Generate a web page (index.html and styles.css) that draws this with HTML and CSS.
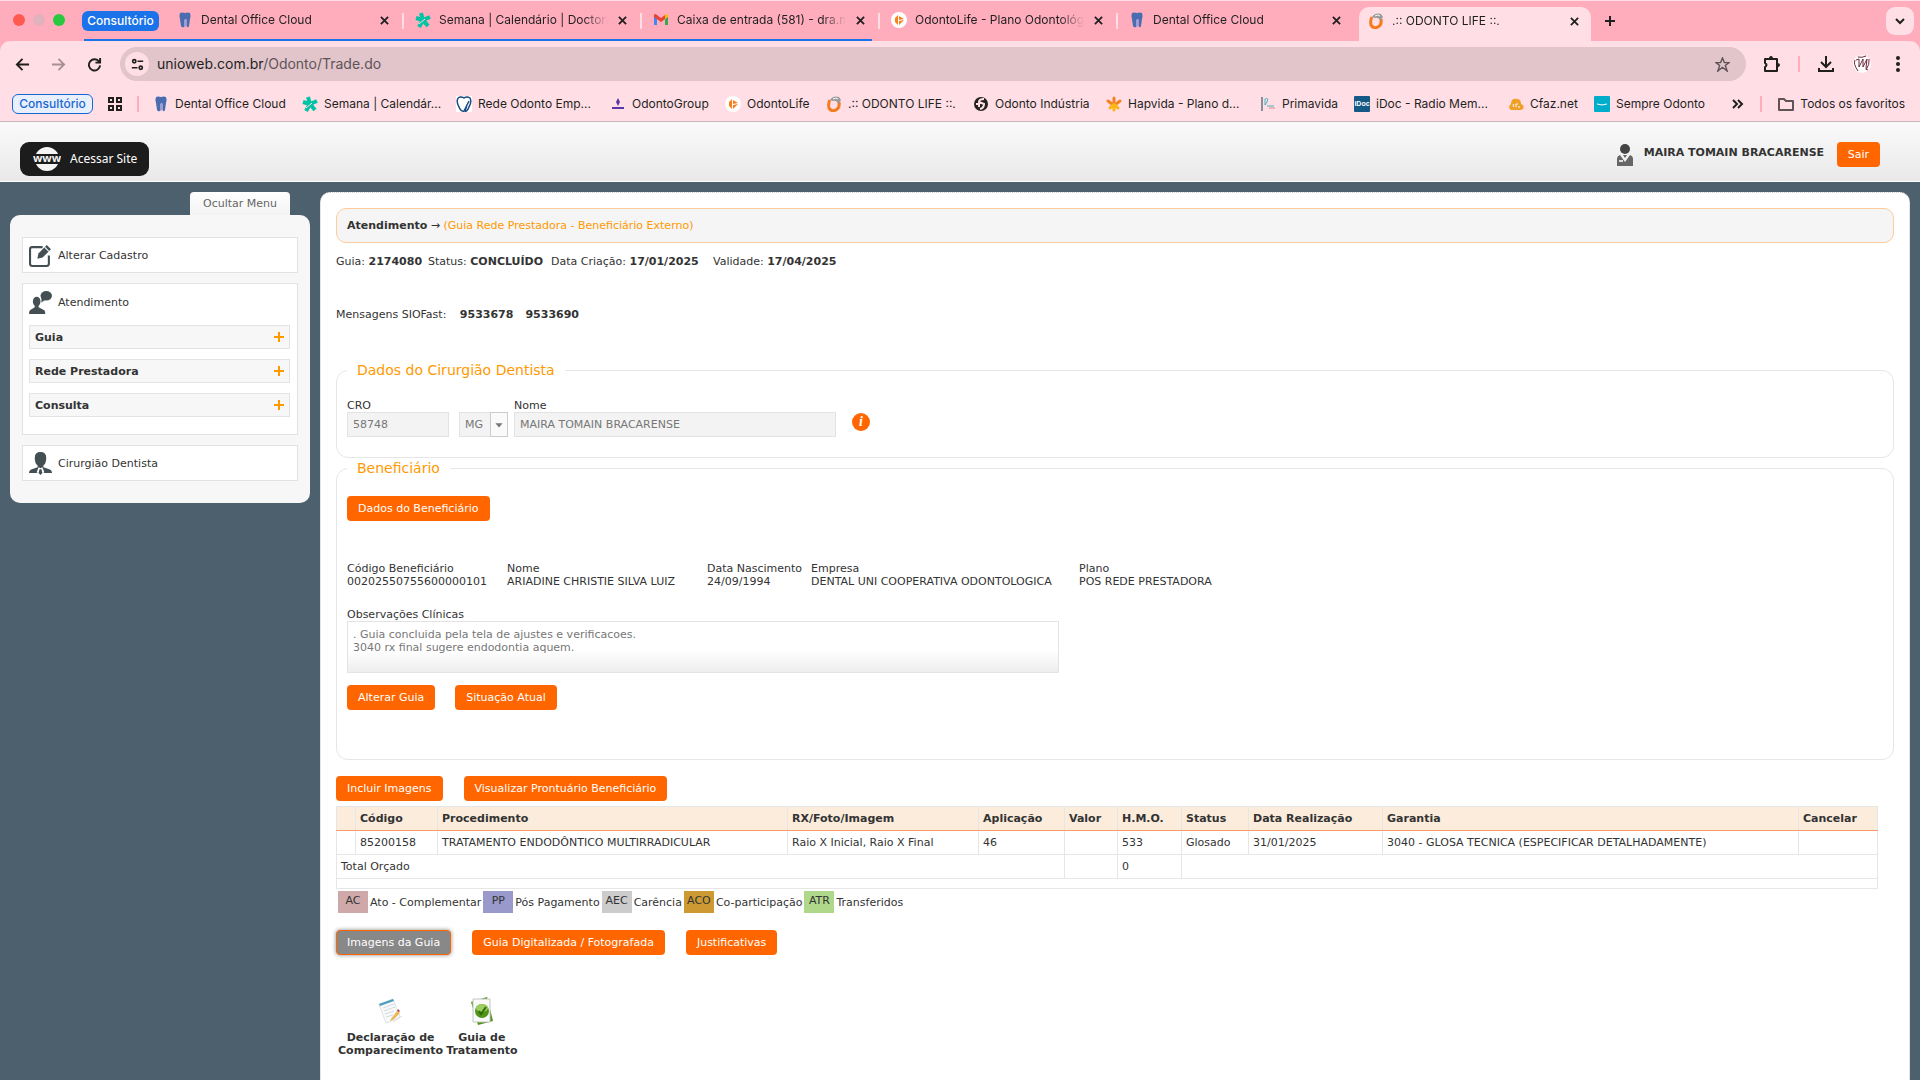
FILE: index.html
```html
<!DOCTYPE html>
<html lang="pt-BR">
<head>
<meta charset="utf-8">
<title>.:: ODONTO LIFE ::.</title>
<link rel="stylesheet" href="styles.css">
</head>
<body>
<svg class="defs" width="0" height="0" aria-hidden="true">
  <symbol id="i-tooth" viewBox="0 0 16 16"><path d="M3 1q2-1 5 0 3-1 5 0 1 2 0 6l-1 7q-1 2-2 1l-1-6q-1-2-2 0v6q-2 1-3-1L3 7Q2 3 3 1z" fill="#4a6cb0"/><path d="M7 15V9q1-4 3-1v6z" fill="#9d9dcf"/></symbol>
  <symbol id="i-star" viewBox="0 0 16 16"><g stroke="#00c3a5" stroke-width="4"><path d="M8 8 6 1M8 8l7-3M8 8l5 6M8 8l-4 7M8 8 1 6"/></g><path d="m4 12 6-5" stroke="#ffdfe5"/></symbol>
  <symbol id="i-gmail" viewBox="0 0 16 16"><path d="M1 3v10h3V7z" fill="#4285f4"/><path d="M15 3v10h-3V7z" fill="#34a853"/><path d="M1 3q1-2 3 0l4 3 4-3v4L8 10 1 5z" fill="#ea4335"/><path d="m12 3 1-1q2 0 2 2v1l-3 2z" fill="#fbbc04"/></symbol>
  <symbol id="i-olife" viewBox="0 0 16 16"><circle cx="8" cy="8" r="8" fill="#fff"/><path d="M7 3v10l-3-3V6zM8 4l5 3-5 1zM8 9l5-1-5 5z" fill="#f58220"/></symbol>
  <symbol id="i-ring" viewBox="0 0 16 16"><path d="M4 4Q2 7 3 12q2 4 7 2 4-2 3-8" fill="none" stroke="#f47c20" stroke-width="3"/><path d="M4 4q3-5 9-3l2 3-3 4q-1-4-5-3z" fill="#999"/><path d="M7 3q3-2 5 0" stroke="#fff" fill="none"/></symbol>
  <symbol id="i-shield" viewBox="0 0 16 16"><path fill="#fff" d="M0 0h16v16H0z"/><path d="M2 2q3-2 6 0 3-2 6 0 2 4-1 9-2 5-4 4l2-6M2 2Q0 6 3 11q2 5 5 4 2-4 5-10" fill="none" stroke="#1b4b84" stroke-width="1.5"/></symbol>
  <symbol id="i-group" viewBox="0 0 16 16"><path d="m8 2 2 4-2 4-2-4z" fill="#5937a8"/><path d="M2 12h12" stroke="#5937a8" stroke-width="2"/></symbol>
  <symbol id="i-globe" viewBox="0 0 16 16"><circle cx="8" cy="8" r="7" fill="#222"/><path d="M11 3q-5 0-5 3l5 2q0 4-4 5M3 8h3v3" fill="none" stroke="#ffdfe5" stroke-width="2"/></symbol>
  <symbol id="i-flower" viewBox="0 0 16 16"><g fill="none" stroke-width="3" stroke-linecap="round"><path d="M8 2v4M2 5l4 3M14 5l-4 3" stroke="#f58220"/><path d="m4 12 3-3M12 12 9 9M8 14v-3" stroke="#fdb515"/></g></symbol>
  <symbol id="i-prima" viewBox="0 0 16 16"><path d="M2 1v14" stroke="#89909c" stroke-width="2"/><path d="M5 9V3q4-2 2 3L5 9M7 10h7" stroke="#4fb0bd" fill="none"/><path d="M9 12h6" stroke="#d88"/></symbol>
  <symbol id="i-cloud" viewBox="0 0 16 16"><path d="M3 14q-4-3 0-6 0-6 6-5 4 0 4 5 4 1 2 5-1 1-3 1z" fill="#f0a029"/><path d="M6 8q-2 1 0 3M8 11V8h2M10 11h2" stroke="#fff" fill="none"/></symbol>
  <symbol id="i-close" viewBox="0 0 10 10"><path d="m1 1 8 8M9 1 1 9" stroke="#1f1f1f" stroke-width="2"/></symbol>
</svg>

<div class="browser">
  <header class="tabstrip">
    <div class="lights"><i class="red"></i><i class="off"></i><i class="green"></i></div>
    <button class="group-chip">Consultório</button>
    <div class="tabs">
      <div class="tab"><svg class="fav"><use href="#i-tooth"/></svg><span class="title">Dental Office Cloud</span><button class="x" aria-label="Fechar"><svg><use href="#i-close"/></svg></button></div>
      <div class="tab"><svg class="fav"><use href="#i-star"/></svg><span class="title">Semana | Calendário | Doctora</span><button class="x" aria-label="Fechar"><svg><use href="#i-close"/></svg></button></div>
      <div class="tab"><svg class="fav"><use href="#i-gmail"/></svg><span class="title">Caixa de entrada (581) - dra.m</span><button class="x" aria-label="Fechar"><svg><use href="#i-close"/></svg></button></div>
      <div class="tab"><svg class="fav"><use href="#i-olife"/></svg><span class="title">OdontoLife - Plano Odontológ</span><button class="x" aria-label="Fechar"><svg><use href="#i-close"/></svg></button></div>
      <div class="tab last"><svg class="fav"><use href="#i-tooth"/></svg><span class="title">Dental Office Cloud</span><button class="x" aria-label="Fechar"><svg><use href="#i-close"/></svg></button></div>
      <div class="tab active"><svg class="fav"><use href="#i-ring"/></svg><span class="title">.:: ODONTO LIFE ::.</span><button class="x" aria-label="Fechar"><svg><use href="#i-close"/></svg></button></div>
      <div class="group-line"></div>
    </div>
    <button class="newtab" aria-label="Nova guia"><svg viewBox="0 0 12 12"><path d="M6 1v10M1 6h10" stroke="#1f1f1f" stroke-width="2"/></svg></button>
    <button class="tabsearch" aria-label="Pesquisar guias"><svg viewBox="0 0 10 10"><path d="m1 3 4 4 4-4" fill="none" stroke="#1f1f1f" stroke-width="2"/></svg></button>
  </header>

  <div class="toolbar-wrap">
    <div class="toolbar">
      <button class="tool" aria-label="Voltar"><svg viewBox="0 0 16 16"><path d="M15 8H3M8 2 2 8l6 6" fill="none" stroke="#1f1f1f" stroke-width="2"/></svg></button>
      <button class="tool" aria-label="Avançar"><svg viewBox="0 0 16 16"><path d="M1 8h12M8 2l6 6-6 6" fill="none" stroke="#a78f94" stroke-width="2"/></svg></button>
      <button class="tool" aria-label="Recarregar"><svg viewBox="0 0 16 16"><path d="M13 5a6 6 0 1 0 1 4M14 1v5H9" fill="none" stroke="#1f1f1f" stroke-width="2"/></svg></button>
      <div class="omnibox">
        <button class="site" aria-label="Informações do site"><svg viewBox="0 0 16 16"><g fill="none" stroke="#1f1f1f" stroke-width="2"><circle cx="4" cy="4" r="2"/><path d="M8 4h7M1 12h7"/><circle cx="12" cy="12" r="2"/></g></svg></button>
        <div class="url">unioweb.com.br<span>/Odonto/Trade.do</span></div>
        <button class="tool fav-btn" aria-label="Favoritar"><svg viewBox="0 0 16 16"><path d="m8 1 2 5h5l-4 3 2 6-5-4-5 4 2-6-4-3h5z" fill="none" stroke="#5f5357" stroke-width="1.5"/></svg></button>
      </div>
      <div class="actions">
        <button class="tool" aria-label="Extensões"><svg viewBox="0 0 18 18"><path d="M2 4h12v12H2v-4q3-2 0-4z" fill="none" stroke="#1f1f1f" stroke-width="2" stroke-linejoin="round"/><path d="M6 4q0-3 2-3t2 3zM14 8q3 0 3 2t-3 2z" fill="#1f1f1f"/></svg></button>
        <i class="sep"></i>
        <button class="tool" aria-label="Downloads"><svg viewBox="0 0 18 18"><path d="M9 1v10M4 7l5 5 5-5M2 13v3h14v-3" fill="none" stroke="#1f1f1f" stroke-width="2"/></svg></button>
        <button class="tool" aria-label="Perfil"><svg viewBox="0 0 18 18"><circle cx="9" cy="9" r="9" fill="#fff"/><path d="m3 5 3-1v8l4-8v8l4-8-1 9q0 2 2 2M2 5q-2 4 3 11M5 2q4 1 8-1M16 4q1 5-3 11" fill="none" stroke="#6b2b3a"/></svg></button>
        <button class="tool" aria-label="Menu"><svg viewBox="0 0 18 18" fill="#1f1f1f"><circle cx="9" cy="3" r="2"/><circle cx="9" cy="9" r="2"/><circle cx="9" cy="15" r="2"/></svg></button>
      </div>
    </div>
    <nav class="bookmarks">
      <button class="bm-chip">Consultório</button>
      <button class="apps" aria-label="Apps"><svg viewBox="0 0 14 14"><path d="M1 1h4v4H1zM9 1h4v4H9zM1 9h4v4H1zM9 9h4v4H9z" fill="none" stroke="#1f1f1f" stroke-width="2"/></svg></button>
      <i class="sep"></i>
      <div class="bm-list">
        <a href="#"><svg><use href="#i-tooth"/></svg>Dental Office Cloud</a>
        <a href="#"><svg><use href="#i-star"/></svg>Semana | Calendár...</a>
        <a href="#"><svg><use href="#i-shield"/></svg>Rede Odonto Emp...</a>
        <a href="#"><svg><use href="#i-group"/></svg>OdontoGroup</a>
        <a href="#"><svg><use href="#i-olife"/></svg>OdontoLife</a>
        <a href="#"><svg><use href="#i-ring"/></svg>.:: ODONTO LIFE ::.</a>
        <a href="#"><svg><use href="#i-globe"/></svg>Odonto Indústria</a>
        <a href="#"><svg><use href="#i-flower"/></svg>Hapvida - Plano d...</a>
        <a href="#"><svg><use href="#i-prima"/></svg>Primavida</a>
        <a href="#"><span class="idoc">iDoc</span>iDoc - Radio Mem...</a>
        <a href="#"><svg><use href="#i-cloud"/></svg>Cfaz.net</a>
        <a href="#"><svg viewBox="0 0 16 16"><rect width="16" height="16" rx="1" fill="#00aecb"/><path d="M3 8q5 2 10 0" fill="none" stroke="#fff"/></svg>Sempre Odonto</a>
      </div>
      <button class="more" aria-label="Mais favoritos"><svg viewBox="0 0 12 12"><path d="m1 2 4 4-4 4M6 2l4 4-4 4" fill="none" stroke="#1f1f1f" stroke-width="2"/></svg></button>
      <i class="sep"></i>
      <a class="all" href="#"><svg viewBox="0 0 16 16"><path d="M1 3h5l2 2h7v9H1z" fill="none" stroke="#5f5357" stroke-width="2" stroke-linejoin="round"/></svg>Todos os favoritos</a>
    </nav>
  </div>
</div>

<div class="topbar">
  <a class="site-link" href="#"><svg viewBox="0 0 28 28"><circle cx="14" cy="14" r="12" fill="#f4f4f4"/><path fill="#1c1c1c" d="M0 9h28v10H0z"/><text x="14" y="17" text-anchor="middle">www</text></svg>Acessar Site</a>
  <div class="user">
    <svg viewBox="0 0 18 24"><circle cx="9" cy="6" r="5" fill="#444"/><path d="M1 23v-7q0-3 3-4l5 7 5-7q3 1 3 4v7z" fill="#666"/><path d="m7 12 2 3 2-3z" fill="#666"/><path fill="#ddd" d="M3 17h4v2H3z"/></svg>
    <strong>MAIRA TOMAIN BRACARENSE</strong>
    <button class="btn">Sair</button>
  </div>
</div>

<div class="layout">
  <aside class="side">
    <button class="hide-menu">Ocultar Menu</button>
    <nav class="menu">
      <section class="box"><a href="#"><svg viewBox="1 1 22 22"><path d="M14 4H4Q2 4 2 6v14q0 2 2 2h14q2 0 2-2v-8" fill="none" stroke="#444f53" stroke-width="2"/><path d="m9 15 1-5 8-8 4 4-8 8z" fill="#444f53"/><path d="m16 4 4 4" stroke="#fff"/></svg>Alterar Cadastro</a></section>
      <section class="box tall"><a href="#"><svg viewBox="0 0 24 24"><ellipse cx="8" cy="11" rx="4" ry="5" fill="#444f53"/><path d="M6 13h4v4l6 3q1 1 1 4H0q0-3 1-4l5-3z" fill="#444f53"/><ellipse cx="18" cy="5" rx="6" ry="5" fill="#444f53"/><path d="m13 7 0 5 4-3z" fill="#444f53"/></svg>Atendimento</a>
        <button class="sub">Guia<svg viewBox="0 0 10 10"><path d="M5 0v10M0 5h10" stroke="#f90" stroke-width="2"/></svg></button>
        <button class="sub">Rede Prestadora<svg viewBox="0 0 10 10"><path d="M5 0v10M0 5h10" stroke="#f90" stroke-width="2"/></svg></button>
        <button class="sub">Consulta<svg viewBox="0 0 10 10"><path d="M5 0v10M0 5h10" stroke="#f90" stroke-width="2"/></svg></button>
      </section>
      <section class="box"><a href="#"><svg viewBox="0 0 24 24"><path d="M6 6q0-6 6-6t6 6q0 6-3 8v2l6 2q3 1 3 4H0q0-3 3-4l6-2v-2Q6 12 6 6z" fill="#444f53"/><path d="m10 16 2 1 2-1 2 5-4 3-4-3z" fill="#fff"/><path d="m11 18h2l1 4-2 2-2-2z" fill="#444f53"/></svg>Cirurgião Dentista</a></section>
    </nav>
  </aside>

  <main class="main">
    <div class="crumb"><strong>Atendimento</strong> → <a href="#">(Guia Rede Prestadora - Beneficiário Externo)</a></div>
    <p class="info"><span>Guia: <b>2174080</b></span><span>Status: <b>CONCLUÍDO</b></span><span>Data Criação: <b>17/01/2025</b></span><span>Validade: <b>17/04/2025</b></span></p>
    <p class="msgs">Mensagens SIOFast: <b>9533678</b><b>9533690</b></p>

    <fieldset class="dentist">
      <legend>Dados do Cirurgião Dentista</legend>
      <div class="form">
        <div class="field cro"><label for="cro">CRO</label><input id="cro" value="58748" disabled></div>
        <div class="field uf"><select aria-label="UF" disabled><option>MG</option></select><svg viewBox="0 0 18 25"><path d="M5 11h8l-4 5z" fill="#777"/></svg></div>
        <div class="field nome"><label for="nome">Nome</label><input id="nome" value="MAIRA TOMAIN BRACARENSE" disabled></div>
        <button class="i-btn" aria-label="Informações">i</button>
      </div>
    </fieldset>

    <fieldset class="benef">
      <legend>Beneficiário</legend>
      <button class="btn">Dados do Beneficiário</button>
      <dl class="data">
        <div><dt>Código Beneficiário</dt><dd>00202550755600000101</dd></div>
        <div><dt>Nome</dt><dd>ARIADINE CHRISTIE SILVA LUIZ</dd></div>
        <div><dt>Data Nascimento</dt><dd>24/09/1994</dd></div>
        <div><dt>Empresa</dt><dd>DENTAL UNI COOPERATIVA ODONTOLOGICA</dd></div>
        <div><dt>Plano</dt><dd>POS REDE PRESTADORA</dd></div>
      </dl>
      <label for="obs">Observações Clínicas</label>
      <textarea id="obs" disabled>. Guia concluida pela tela de ajustes e verificacoes.
3040 rx final sugere endodontia aquem.</textarea>
      <div class="row"><button class="btn">Alterar Guia</button><button class="btn">Situação Atual</button></div>
    </fieldset>

    <div class="row images"><button class="btn">Incluir Imagens</button><button class="btn">Visualizar Prontuário Beneficiário</button></div>

    <table class="grid">
      <colgroup><col class="c1"><col class="c2"><col class="c3"><col class="c4"><col class="c5"><col class="c6"><col class="c7"><col class="c8"><col class="c9"><col class="c10"><col class="c11"></colgroup>
      <thead><tr><th></th><th>Código</th><th>Procedimento</th><th>RX/Foto/Imagem</th><th>Aplicação</th><th>Valor</th><th>H.M.O.</th><th>Status</th><th>Data Realização</th><th>Garantia</th><th>Cancelar</th></tr></thead>
      <tbody>
        <tr><td></td><td>85200158</td><td>TRATAMENTO ENDODÔNTICO MULTIRRADICULAR</td><td>Raio X Inicial, Raio X Final</td><td>46</td><td></td><td>533</td><td>Glosado</td><td>31/01/2025</td><td>3040 - GLOSA TECNICA (ESPECIFICAR DETALHADAMENTE)</td><td></td></tr>
        <tr><td colspan="5">Total Orçado</td><td></td><td>0</td><td colspan="4"></td></tr>
        <tr class="foot"><td colspan="11"></td></tr>
      </tbody>
    </table>

    <div class="key">
      <span class="sw ac">AC</span><span class="name">Ato - Complementar</span>
      <span class="sw pp">PP</span><span class="name">Pós Pagamento</span>
      <span class="sw aec">AEC</span><span class="name">Carência</span>
      <span class="sw aco">ACO</span><span class="name">Co-participação</span>
      <span class="sw atr">ATR</span><span class="name">Transferidos</span>
    </div>

    <div class="row tabs-row"><button class="btn current">Imagens da Guia</button><button class="btn">Guia Digitalizada / Fotografada</button><button class="btn">Justificativas</button></div>

    <div class="docs">
      <a href="#"><svg viewBox="0 0 28 28"><path d="m2 7 14-5 7 18-14 6z" fill="#f8f9fa" stroke="#dde1e5"/><path d="m2 7 14-5 1 2L3 9z" fill="#4c9fc0"/><path d="m6 11 11-4M7 14l11-4M8 17l9-3M9 20l7-2" stroke="#d3dae0"/><path d="m14 22 6-8 3 2-7 7-3 1z" fill="#e9b955"/><path d="m20 14 1-2 2 2-1 1z" fill="#b3444c"/><path d="m16 25 9-6" stroke="#d8dbde"/></svg>Declaração de<br>Comparecimento</a>
      <a href="#"><svg viewBox="0 0 28 28"><path d="m3 5 16-5 6 24-15 4z" fill="#4f8f1a"/><path d="M5 2h17v23H5z" fill="#fafafa" stroke="#c2c6c0"/><circle cx="14" cy="14" r="7" fill="#4f9416"/><ellipse cx="14" cy="11" rx="6" ry="4" fill="#9bcd61"/><path d="m11 14 2 3 5-7" fill="none" stroke="#2f6a0c" stroke-width="2"/></svg>Guia de<br>Tratamento</a>
    </div>
  </main>
</div>
</body>
</html>
```
FILE: styles.css
```css
* { box-sizing: border-box; }
body {
  margin: 0;
  min-height: 100vh;
  display: flex;
  flex-direction: column;
  background: #4d606e;
  color: #333;
  font: 11px/13px "DejaVu Sans", Verdana, sans-serif;
}
button { margin: 0; padding: 0; border: 0; background: none; font: inherit; color: inherit; }
a { color: inherit; text-decoration: none; }
p, dl, dd { margin: 0; }
svg { display: block; flex: none; }
.defs { position: absolute; }

/* Browser window */
.browser { background: #ffadbc; color: #1f1f1f; font: 12px/16px Inter, sans-serif; }
.tabstrip { display: flex; height: 41px; border-top: 1px solid #ffdfe5; }
.lights { display: flex; gap: 8px; padding: 13px 17px 0 13px; }
.lights i { width: 12px; height: 12px; border-radius: 50%; }
.red { background: #ff5a52; }
.off { background: #dfb2bd; }
.green { background: #28c840; }
.group-chip { height: 20px; width: 77px; margin-top: 10px; border-radius: 6px; background: #1a73e8; color: #fff; font-weight: 500; }
.tabs { display: flex; position: relative; flex: 0 1 1425px; margin-left: 7px; min-width: 0; }
.tab { display: flex; align-items: center; flex: 0 1 238px; min-width: 0; height: 28px; margin-top: 5px; padding: 0 15px 0 11px; position: relative; }
.tab::after { content: ""; position: absolute; right: 0; top: 7px; width: 2px; height: 16px; background: #ffdfe5; }
.tab.last::after, .tab.active::after { display: none; }
.fav { width: 16px; height: 16px; margin-right: 8px; }
.title { flex: 1; min-width: 0; overflow: hidden; white-space: nowrap; -webkit-mask-image: linear-gradient(to left, transparent, #000 24px); mask-image: linear-gradient(to left, transparent, #000 24px); }
.x { margin-left: 10px; }
.x svg { width: 9px; height: 9px; }
.tab.active { flex: 0 1 232px; height: 34px; margin: 6px 0 0 3px; padding: 0 12px 6px 9px; border-radius: 10px 10px 0 0; background: #ffdfe5; }
.group-line { position: absolute; left: -82px; bottom: 0; width: 788px; height: 2px; background: #1a73e8; }
.newtab { padding: 0 13px; }
.newtab svg { width: 12px; height: 12px; }
.tabsearch { width: 28px; height: 28px; margin: 6px 6px 0 auto; border-radius: 9px; background: #ffdfe5; display: grid; place-items: center; }
.tabsearch svg { width: 10px; height: 10px; }

.toolbar-wrap { background: #ffdfe5; border-radius: 10px 10px 0 0; border-bottom: 1px solid #cbb4ba; }
.toolbar { display: flex; align-items: center; padding: 6px 12px; }
.tool { width: 20px; height: 20px; display: grid; place-items: center; margin-right: 16px; }
.tool svg { width: 15px; height: 15px; }
.omnibox { flex: 1; display: flex; align-items: center; height: 34px; padding: 0 14px 0 5px; border-radius: 17px; background: #e1c5cb; }
.site { width: 24px; height: 24px; border-radius: 50%; background: #ffdfe5; display: grid; place-items: center; }
.site svg { width: 13px; height: 13px; }
.url { flex: 1; margin-left: 8px; font-size: 14px; }
.url span { color: #5f5357; }
.fav-btn { margin: 0; }
.actions { display: flex; align-items: center; gap: 16px; margin-left: 16px; }
.actions .tool { margin: 0; }
.actions .tool svg { width: 18px; height: 18px; }
.sep { width: 2px; height: 16px; background: #ffadbc; }
.bookmarks { display: flex; align-items: center; height: 34px; padding: 0 15px 0 12px; }
.bm-chip { width: 81px; height: 20px; border: 1px solid #1967d2; border-radius: 6px; background: #e8f0fe; color: #1967d2; font-weight: 500; }
.apps { padding: 0 15px; }
.apps svg { width: 14px; height: 14px; }
.bm-list { flex: 1; min-width: 0; overflow: hidden; display: grid; grid-template-columns: 149px 154px 154px 115px 101px 147px 133px 154px 94px 154px 86px auto; margin-left: 14px; white-space: nowrap; }
.bookmarks a { display: flex; align-items: center; gap: 6px; }
.bookmarks a svg { width: 16px; height: 16px; }
.idoc { width: 16px; height: 16px; border-radius: 1px; background: #155a86; color: #fff; font: bold 7px/16px "Liberation Sans", sans-serif; text-align: center; }
.more { padding: 0 16px; }
.more svg { width: 12px; height: 12px; }
.bookmarks .all { margin-left: 16px; white-space: nowrap; }

/* Site header */
.topbar { display: flex; justify-content: space-between; align-items: flex-start; height: 60px; padding: 20px 40px 0 20px; background: linear-gradient(#fafafa, #e9e9e9); border-bottom: 1px solid #fff; }
.site-link { display: flex; align-items: center; gap: 9px; height: 34px; padding: 0 12px 0 13px; border-radius: 9px; background: #1c1c1c; color: #fff; font: 12px/16px "Noto Sans", sans-serif; }
.site-link svg { width: 28px; height: 28px; }
.site-link text { fill: #f4f4f4; font: bold 11px "Open Sans", sans-serif; }
.user { display: flex; align-items: center; }
.user svg { width: 18px; height: 24px; }
.user strong { min-width: 183px; margin: 0 10px 4px; }
.btn { height: 25px; padding: 0 11px; border-radius: 4px; background: #f60; color: #fff; white-space: nowrap; }

/* Page */
.layout { flex: 1; display: flex; align-items: stretch; gap: 10px; padding: 10px 10px 0; }
.side { flex: 0 0 300px; display: flex; flex-direction: column; align-items: flex-end; }
.hide-menu { width: 100px; height: 23px; margin-right: 20px; border-radius: 4px 4px 0 0; background: linear-gradient(#fff, #f3f3f3); color: #666; }
.menu { width: 100%; display: flex; flex-direction: column; gap: 10px; padding: 22px 12px; border-radius: 10px; background: #f7f7f7; }
.box { padding: 0 7px 0 6px; border: 1px solid #e3e3e3; background: #fff; }
.box a { display: flex; align-items: center; gap: 6px; height: 34px; }
.box svg { width: 23px; height: 23px; }
.box.tall { padding-bottom: 17px; }
.box.tall a { height: 41px; padding-bottom: 4px; }
.sub { display: flex; align-items: center; justify-content: space-between; width: 100%; height: 24px; margin-bottom: 10px; padding: 0 5px; border: 1px solid #e3e3e3; background: #f7f7f7; font-weight: bold; }
.sub:last-child { margin-bottom: 0; }
.box .sub svg { width: 10px; height: 10px; }

.main { flex: 1; min-width: 0; padding: 15px 15px 16px; border: 1px dotted #ccc; border-bottom: 0; border-radius: 10px 10px 0 0; background: #fff; }
.crumb { height: 35px; padding: 10px; border: 1px solid #fc9; border-radius: 10px; background: #f5f5f5; }
.crumb a { color: #f90; }
.info { display: grid; grid-template-columns: 92px 123px 162px auto; margin-top: 12px; white-space: nowrap; }
.msgs { margin: 40px 0; }
.msgs b { margin-left: 10px; }
.msgs b + b { margin-left: 12px; }
fieldset { margin: 0; padding: 0 10px; border: 1px solid #e6e6e6; border-radius: 12px; }
legend { padding: 0 10px; color: #f90; font-size: 14px; line-height: 18px; }
.dentist { margin-bottom: 1px; padding-bottom: 20px; }
.form { display: flex; align-items: flex-end; padding-top: 20px; }
.field { position: relative; display: flex; flex-direction: column; }
.field input, .field select { height: 25px; padding: 0 5px; border: 1px solid #e3e3e3; border-radius: 0; background: #f3f3f3; color: #777; font: inherit; opacity: 1; appearance: none; }
.cro { width: 102px; margin-right: 10px; }
.uf { width: 49px; margin-right: 6px; }
.uf svg { position: absolute; right: 0; top: 0; width: 18px; height: 25px; border: 1px solid #ccc; background: #fafafa; }
.nome { width: 322px; }
.i-btn { width: 18px; height: 18px; margin: 0 0 6px 16px; border-radius: 50%; background: #f60; color: #fff; font: italic bold 14px/18px "Liberation Serif", serif; }
.benef { padding-bottom: 49px; }
.benef .btn { display: block; }
.benef > .btn { margin-top: 19px; }
.data { display: grid; grid-template-columns: 160px 200px 104px 268px auto; margin: 41px 0 20px; white-space: nowrap; }
textarea { display: block; width: 100%; max-width: 712px; height: 52px; padding: 6px 5px; border: 1px solid #e3e3e3; background: linear-gradient(#fff 55%, #eee); color: #777; font: inherit; resize: none; overflow: hidden; }
.row { display: flex; gap: 21px; }
.benef .row { gap: 20px; margin-top: 12px; }
.images { margin: 16px 0 5px; }
.grid { width: calc(100% - 16px); table-layout: fixed; border-collapse: collapse; }
.grid th, .grid td { height: 24px; padding: 0 4px; border: 1px solid #e6e6e6; text-align: left; white-space: nowrap; }
.grid th { background: #fbecdc; border-bottom: 1px solid #f96; }
.grid .foot td { height: 10px; }
.c1 { width: 19px; } .c2 { width: 82px; } .c3 { width: 350px; } .c4 { width: 191px; } .c5 { width: 86px; }
.c6 { width: 53px; } .c7 { width: 64px; } .c8 { width: 67px; } .c9 { width: 134px; } .c11 { width: 79px; }
.key { display: flex; align-items: center; gap: 2px; margin: 2px; }
.sw { width: 30px; height: 22px; line-height: 19px; text-align: center; }
.ac { background: #cfa9a9; }
.pp { background: #99c; }
.aec { background: #ccc; }
.aco { background: #c93; }
.atr { background: #b0d88b; }
.tabs-row { margin-top: 17px; }
.current { border: 1px solid #f60; background: #888; padding: 0 10px; box-shadow: 0 0 4px #888; }
.docs { display: flex; gap: 3px; margin: 42px 2px 0; font-weight: bold; text-align: center; }
.docs svg { width: 28px; height: 28px; margin: 0 auto 6px; }
```
